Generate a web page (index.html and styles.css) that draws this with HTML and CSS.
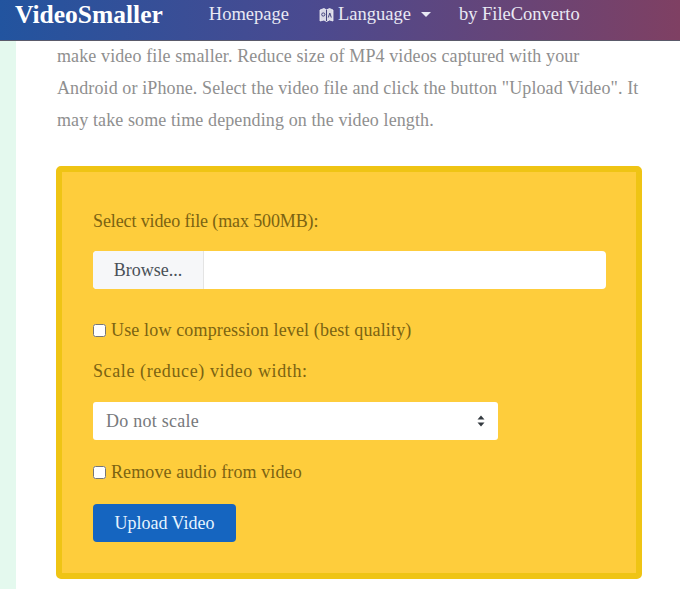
FILE: index.html
```html
<!DOCTYPE html>
<html lang="en">
  <head>
    <meta charset="UTF-8" />
    <meta name="viewport" content="width=device-width, initial-scale=1.0" />
    <title>VideoSmaller</title>
    <link rel="stylesheet" href="styles.css">
  </head>
  <body>
    <nav class="navbar">
      <a class="brand" href="#">VideoSmaller</a>
      <a class="nav-link" href="#">Homepage</a>
      <a class="nav-link nav-lang" href="#">
        <svg class="lang-icon" viewBox="0 0 15 16" width="15" height="16">
          <path d="M1 3l4-1.500 2.500 1.500 3-1.500 3.500 1.500v11l-3.500-1-3 1.500-2.500-1.500-4 1z" fill="#d9d9e6" stroke="#f1f1f6" stroke-width="0.8" />
          <path d="M7.500 3v11" stroke="#45457e" stroke-width="1" />
          <circle cx="4.300" cy="7.500" r="1.600" fill="none" stroke="#45457e" stroke-width="1" />
          <path d="M9.300 10.500l1.500-4.500 1.500 4.500" fill="none" stroke="#45457e" stroke-width="1" />
        </svg>
        Language
        <span class="caret"></span>
      </a>
      <a class="nav-link" href="#">by FileConverto</a>
    </nav>
    <div class="page">
      <div class="side"></div>
      <main class="content">
        <p class="intro">
          make video file smaller. Reduce size of MP4 videos captured with your<br />
          Android or iPhone. Select the video file and click the button "Upload Video". It<br />
          may take some time depending on the video length.
        </p>
        <form class="upload-box">
          <label class="field-label" for="video-file">Select video file (max 500MB):</label>
          <div class="file-input" id="video-file">
            <span class="browse">Browse...</span>
          </div>
          <label class="check-row compress-row">
            <input type="checkbox" />
            Use low compression level (best quality)
          </label>
          <label class="field-label scale-label" for="scale">Scale (reduce) video width:</label>
          <div class="select-box" id="scale">
            <span>Do not scale</span>
            <svg class="select-arrows" viewBox="0 0 8 12" width="8" height="12">
              <path d="M4 0.500L7.500 4.500H0.500z M4 11.500L0.500 7.500H7.500z" fill="#343a40" />
            </svg>
          </div>
          <label class="check-row audio-row">
            <input type="checkbox" />
            Remove audio from video
          </label>
          <button type="button" class="upload-btn">Upload Video</button>
        </form>
      </main>
    </div>
  </body>
</html>
```

FILE: styles.css
```css
* {
  box-sizing: border-box;
  margin: 0;
  padding: 0;
}
html,
body {
  height: 589px;
  overflow: hidden;
}
body {
  background-color: #fff;
  font-family: 'Liberation Serif', 'DejaVu Serif', serif;
  font-size: 18px;
  color: #7b6312;
}
.navbar {
  display: flex;
  align-items: center;
  height: 41px;
  padding: 0 15px 11px;
  background: linear-gradient(90deg, #22549f 0%, #4a4a90 45%, #7f4063 100%);
  border-bottom: 1px solid #5a5a6a;
}
.brand {
  margin-right: 46px;
  color: #fff;
  font-size: 25.5px;
  font-weight: bold;
  text-decoration: none;
}
.nav-link {
  display: flex;
  align-items: center;
  margin-right: 30px;
  color: #e9e9f4;
  font-size: 18.5px;
  text-decoration: none;
}
.nav-lang {
  gap: 4px;
  margin-right: 28px;
}
.caret {
  margin-left: 6px;
  border-top: 5px solid #e9e9f4;
  border-left: 5px solid transparent;
  border-right: 5px solid transparent;
}
.page {
  display: flex;
  height: 548px;
}
.side {
  flex: 0 0 16px;
  background-color: #e4f9ee;
}
.content {
  flex: 1;
  padding: 0 38px 0 40px;
}
.intro {
  margin-top: -1px;
  padding-left: 1px;
  color: #8f8f8f;
  font-size: 18px;
  letter-spacing: 0.11px;
  line-height: 32px;
  white-space: nowrap;
}
.upload-box {
  display: flex;
  flex-direction: column;
  align-items: flex-start;
  width: 586px;
  height: 413px;
  margin-top: 30px;
  padding: 39px 31px 0;
  background-color: #fecd3c;
  border: 6px solid #efc414;
  border-radius: 5px;
}
.field-label {
  line-height: 20px;
  letter-spacing: -0.12px;
}
.file-input {
  display: flex;
  width: 513px;
  height: 38px;
  margin-top: 20px;
  background-color: #fff;
  border-radius: 4px;
  overflow: hidden;
}
.browse {
  display: flex;
  align-items: center;
  justify-content: center;
  width: 111px;
  background-color: #f6f7f9;
  border-right: 1px solid #e4e4e4;
  color: #495057;
}
.check-row {
  display: flex;
  align-items: center;
  gap: 5px;
  margin-top: 31px;
  line-height: 20px;
}
.check-row input {
  width: 13px;
  height: 13px;
  margin: 0;
}
.compress-row {
  letter-spacing: 0.15px;
}
.scale-label {
  margin-top: 21px;
  letter-spacing: 0.6px;
}
.select-box {
  display: flex;
  align-items: center;
  justify-content: space-between;
  width: 405px;
  height: 38px;
  margin-top: 21px;
  padding: 0 13px;
  background-color: #fff;
  border-radius: 3px;
  color: #77797c;
  letter-spacing: 0.25px;
}
.audio-row {
  margin-top: 22px;
  letter-spacing: 0.1px;
}
.upload-btn {
  width: 143px;
  height: 38px;
  margin-top: 22px;
  background-color: #1565c0;
  border: none;
  border-radius: 4px;
  color: #e6f4ff;
  font-family: inherit;
  font-size: 18px;
}
```
